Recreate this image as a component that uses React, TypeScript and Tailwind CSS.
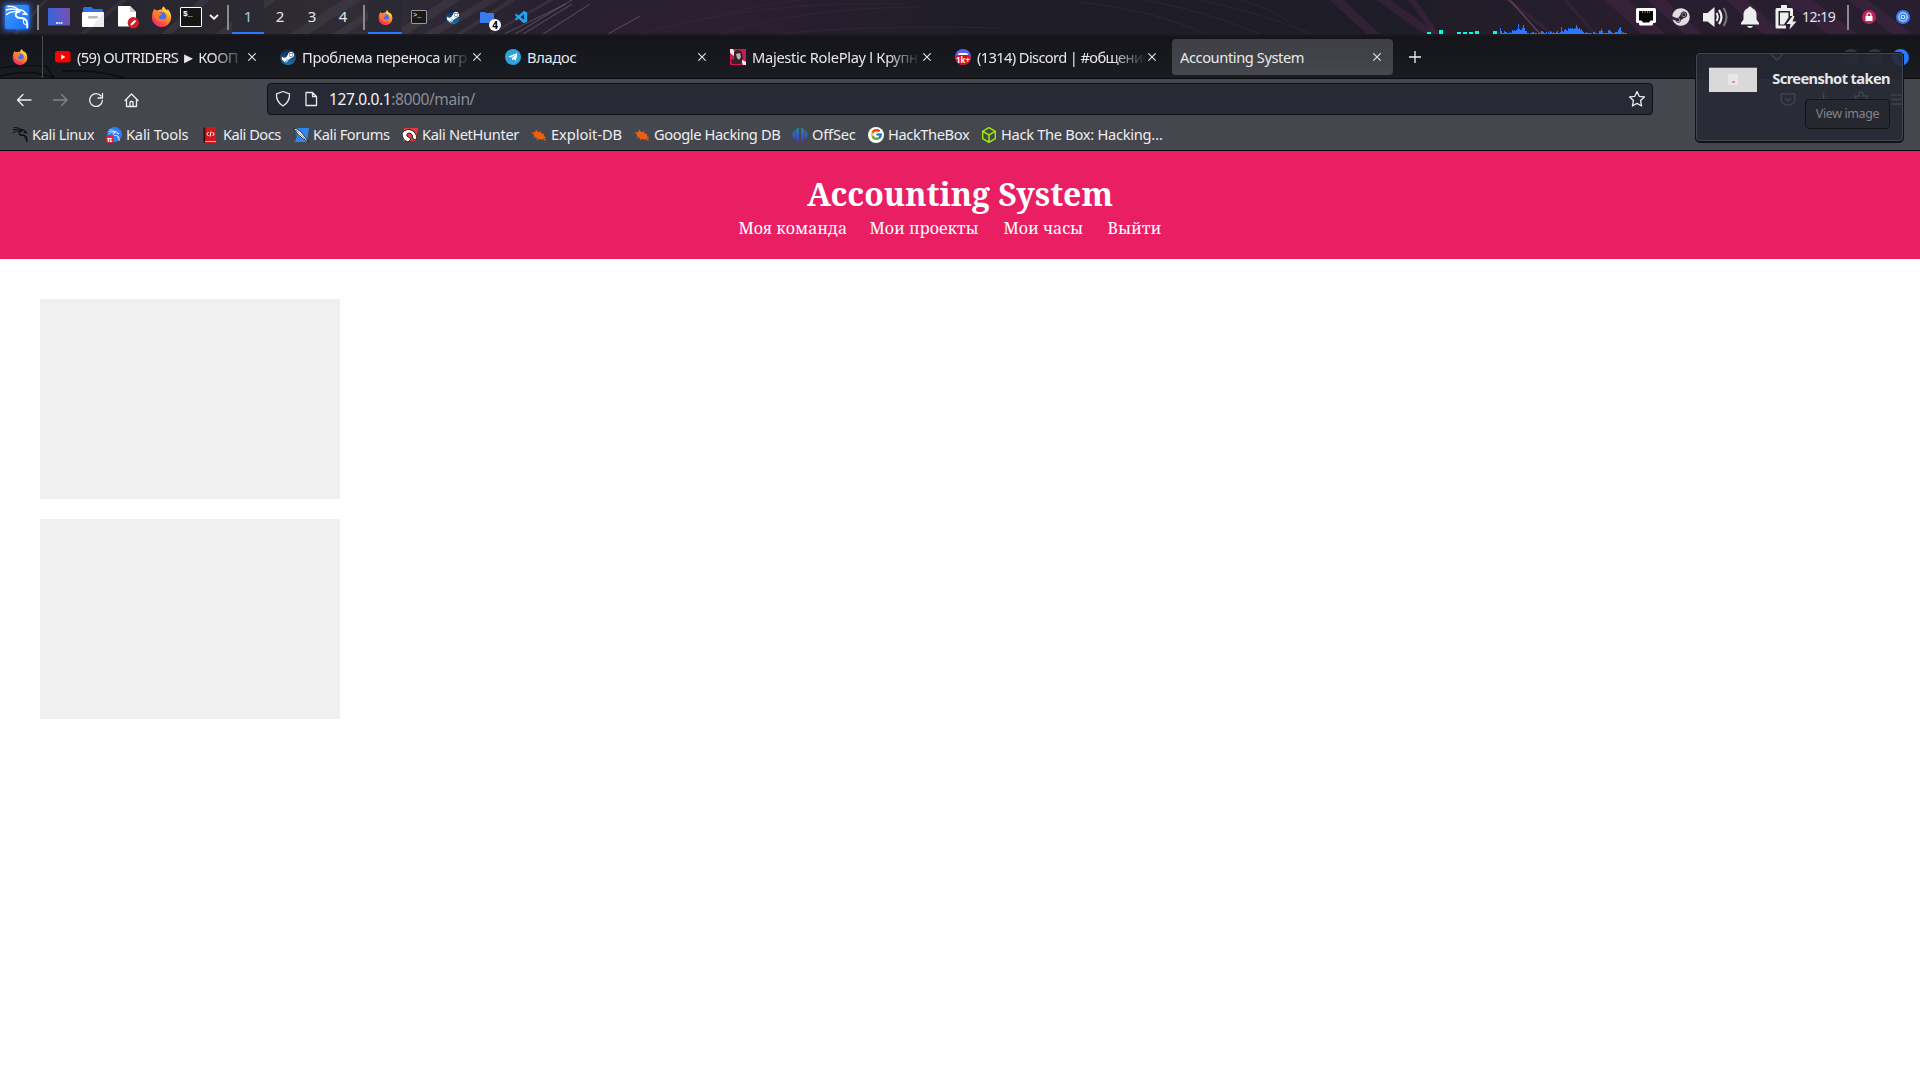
import React from "react";
import { SiHackthebox } from "react-icons/si";
import { FaSteam, FaSteamSymbol, FaTelegramPlane } from "react-icons/fa";
import { FcGoogle } from "react-icons/fc";
import { VscVscode } from "react-icons/vsc";

const SANS = "font-['Noto_Sans',sans-serif]";

function Firefox({ className }: { className: string }) {
  return (
    <svg viewBox="0 0 24 24" className={className}>
      <defs>
        <linearGradient id="fox" x1="0.85" y1="0.05" x2="0.2" y2="0.95">
          <stop offset="0" stopColor="#ffe34a" />
          <stop offset="0.45" stopColor="#ff8a2a" />
          <stop offset="0.8" stopColor="#ff3c4e" />
          <stop offset="1" stopColor="#e8308c" />
        </linearGradient>
      </defs>
      <path d="M3.500 3Q5 5 7.500 5Q9.500 3.800 12 4.200Q12.500 1.500 14.500 0.500Q16 3.500 18.500 5L18.800 3.500Q23.500 8 23 13.500A11 10.800 0 0 1 1 13Q1 7.500 3.500 3Z" fill="url(#fox)" />
      <circle cx="12.200" cy="12.300" r="5.400" fill="#4f6be8" />
      <path d="M3.300 6Q6 6 8 6.500C10 7 11 8.500 13 8.800C12.500 10.500 9.500 10.200 9 12.200C8.500 14 10 15.500 12.500 15.200C15 15 16 14 17.500 15C15 18.500 9 19 6 15.500C3 12 2.500 9 3.300 6Z" fill="#ff7a30" />
      <path d="M14.500 0.500C16 4 20 5.500 22 10C19.500 9 17.500 8.500 15 6C13.500 4 13.500 2 14.500 0.500Z" fill="#ffd33d" />
    </svg>
  );
}

function Dragon({ className }: { className: string }) {
  return (
    <svg viewBox="0 0 24 24" className={className} fill="none" stroke="currentColor" strokeLinecap="round" strokeLinejoin="round">
      <path d="M3 1.500Q9 0.500 13.500 4.500" strokeWidth="1.300" />
      <path d="M1.500 5Q8 2.500 14 6" strokeWidth="1.500" />
      <path d="M1.500 9.500Q6 5.500 13 7" strokeWidth="1.300" />
      <path d="M13 5Q17 4 19.500 7L22 9.500L18 9" strokeWidth="1.700" />
      <path d="M15 6.500Q9.500 7.500 11 11Q12.500 13.500 16.500 13Q21.500 13.500 22 18L22.300 22.500" strokeWidth="2" />
      <path d="M19 14.500Q17 18 20.500 19.500" strokeWidth="1.100" />
    </svg>
  );
}

function Bug() {
  return (
    <svg width="16" height="16" viewBox="0 0 16 16">
      <ellipse cx="8" cy="8.500" rx="6" ry="3.400" transform="rotate(28 8 8.500)" fill="#ee6011" />
      <path d="M1 5.500L4 7M5 3L6 6M9.500 4.500L9 7M13 7L11 8.500M2.500 10.500L5.500 9.500M6 13L7 10.500M14.500 13.500L12 11M15 10.500L12 10" stroke="#ee6011" strokeWidth="1.100" />
    </svg>
  );
}

function SteamBall({ className }: { className: string }) {
  return (
    <span className={`${className} flex items-center justify-center overflow-hidden rounded-full bg-linear-to-b from-[#11204a] to-[#1b78ad]`}>
      <FaSteamSymbol className="size-[14px] text-white" />
    </span>
  );
}

function Wallpaper() {
  const streaks = [
    [10, 40, 50, -5, 3], [75, 40, 130, -5, 4], [160, 40, 210, -5, 7], [215, 40, 275, -5, 9], [290, 40, 360, -5, 10],
    [330, 40, 400, -5, 7], [390, 40, 460, -5, 9], [420, 40, 500, -5, 7], [450, 40, 520, -5, 4], [480, 40, 560, -5, 3],
  ];
  const fine = [
    [500, 36, 566, 4], [512, 36, 575, -2], [520, 36, 572, 4], [540, 36, 590, 4], [608, 34, 640, 16],
  ];
  const right = [
    [1330, -6, 1380, 40, 9], [1375, -6, 1440, 40, 8], [1408, -6, 1440, 40, 6], [1500, -6, 1560, 40, 3],
    [1560, -6, 1600, 40, 3], [1610, -6, 1660, 40, 16], [1650, -6, 1700, 40, 12], [1730, -6, 1780, 40, 14], [1790, -6, 1850, 40, 18], [1850, -6, 1910, 40, 12],
  ];
  return (
    <svg className="absolute inset-0 h-[36px] w-full" viewBox="0 0 1920 36" preserveAspectRatio="none">
      <defs>
        <linearGradient id="wall" x1="0" x2="1">
          <stop offset="0" stopColor="#25222c" />
          <stop offset="0.2" stopColor="#302d37" />
          <stop offset="0.28" stopColor="#28202f" />
          <stop offset="0.38" stopColor="#2c1f30" />
          <stop offset="0.5" stopColor="#1f1e28" />
          <stop offset="0.72" stopColor="#1e1d27" />
          <stop offset="0.85" stopColor="#281d2e" />
          <stop offset="1" stopColor="#271f30" />
        </linearGradient>
      </defs>
      <rect width="1920" height="36" fill="url(#wall)" />
      {streaks.map(([a, b, c, d, w]) => (
        <line key={a} x1={a} y1={b} x2={c} y2={d} strokeWidth={w} stroke="#57525c" opacity="0.28" />
      ))}
      {fine.map(([a, b, c, d]) => (
        <line key={a} x1={a} y1={b} x2={c} y2={d} strokeWidth="1.200" stroke="#79637c" opacity="0.5" />
      ))}
      {right.map(([a, b, c, d, w]) => (
        <line key={a} x1={a} y1={b} x2={c} y2={d} strokeWidth={w} stroke="#4a2748" opacity="0.45" />
      ))}
      <line x1="1508" y1="-2" x2="1542" y2="36" stroke="#705068" strokeWidth="1.500" opacity="0.7" />
      <g fill="none" stroke="#3d2440" opacity="0.6">
        <path d="M640 34Q760 0 900 4M720 34Q800 8 920 7M760 36Q860 24 1000 28M700 20Q760 4 800 0" />
        <path d="M1080 2Q1160 12 1205 34M1130 -2Q1200 8 1260 34M1190 -2Q1260 12 1312 34M1235 -2Q1270 8 1290 22" />
      </g>
      <rect y="34" width="1920" height="2" fill="#1b1a20" />
    </svg>
  );
}

const blueBars = [6, 3, 1, 1, 3, 2, 2, 1, 1, 1, 2, 1, 4, 3, 4, 3, 4, 5, 10, 5, 4, 4, 6, 9, 6, 3, 3, 1, 1, 0, 1, 1, 2, 2, 1, 1, 1, 0, 1, 1, 1, 3, 3, 2, 1, 1, 2, 0, 2, 1, 3, 2, 1, 2, 1, 1, 2, 3, 1, 1, 2, 7, 3, 2, 4, 5, 4, 3, 6, 5, 6, 5, 6, 5, 5, 6, 9, 7, 5, 6, 4, 5, 3, 2, 1, 1, 2, 1, 1, 1, 1, 1, 0, 2, 2, 1, 1, 0, 1, 3, 3, 5, 3, 1, 1, 1, 1, 1, 4, 4, 3, 2, 1, 1, 1, 2, 2, 2, 4, 6, 7, 3, 1, 2, 1, 1, 1];

function Graph() {
  return (
    <svg width="202" height="14" viewBox="0 0 202 14" shapeRendering="crispEdges" className="mt-[20px] shrink-0">
      {[[0, 2], [12, 4], [30, 2], [36, 2], [42, 2], [48, 3], [66, 3]].map(([x, h]) => (
        <rect key={x} x={x} y={14 - h} width="4" height={h} fill="#00ffdc" />
      ))}
      {blueBars.map((h, i) => (
        <rect key={i} x={73 + i} y={14 - h} width="1" height={h} fill="#2777ff" />
      ))}
    </svg>
  );
}

function Sep({ className }: { className: string }) {
  return <span className={`${className} mt-[5px] h-[25px] w-[2px] shrink-0 bg-[#8b898f]`} />;
}

function Panel() {
  return (
    <div className={`relative h-[36px] overflow-hidden ${SANS}`}>
      <Wallpaper />
      <div className="relative flex h-[34px] items-start">
        <span className="mt-[5px] ml-[5px] flex size-[24px] shrink-0 items-center justify-center rounded-[2px] bg-linear-to-br from-[#3c9bf5] to-[#1d6fff] shadow-[0_0_5px_1px_#2777ff]">
          <Dragon className="size-[24px] text-white" />
        </span>
        <Sep className="ml-[8px]" />
        <svg width="22" height="18" viewBox="0 0 22 18" className="mt-[8px] ml-[9px] shrink-0">
          <defs>
            <linearGradient id="desk" x1="0" y1="0.6" x2="1" y2="0.3">
              <stop offset="0.2" stopColor="#3f63d6" />
              <stop offset="1" stopColor="#7a4fae" />
            </linearGradient>
          </defs>
          <rect width="22" height="17.500" rx="1" fill="url(#desk)" />
          <path d="M8 15h2M10.500 15h2M13 15h1.500" stroke="#fff" strokeWidth="1.500" />
        </svg>
        <svg width="22" height="20" viewBox="0 0 22 20" className="mt-[7px] ml-[12px] shrink-0">
          <path d="M1 1.500q0-1.500 1.500-1.500h7l2 2h8q1.500 0 1.500 1.500v5H1z" fill="#2f6fe4" />
          <rect y="5" width="22" height="15" rx="1" fill="#fff" />
          <path d="M22 5v15H10z" fill="#ececec" />
          <rect x="6" y="9" width="10" height="2.500" rx="1.200" fill="#b9b9b9" />
        </svg>
        <svg width="21" height="23" viewBox="0 0 21 23" className="mt-[6px] ml-[14px] shrink-0">
          <path d="M1 0h11l6 6v14.500H1q-1 0-1-1V1q0-1 1-1z" fill="#fff" />
          <path d="M12 0v5q0 1 1 1h5z" fill="#cfcfcf" />
          <circle cx="15.300" cy="16.700" r="5.700" fill="#d01f28" />
          <path d="M13 19l4.500-4.500" stroke="#fff" strokeWidth="2" />
        </svg>
        <Firefox className="mt-[6px] ml-[12px] size-[21px] shrink-0" />
        <span className="mt-[7px] ml-[8px] h-[20px] w-[22px] shrink-0 rounded-[1px] border border-white bg-[#151515] pt-[1px] pl-[2px] font-['Liberation_Mono',monospace] text-[8px] leading-[9px] font-bold text-white">$_</span>
        <svg width="10" height="6" viewBox="0 0 10 6" className="mt-[14px] ml-[7px] shrink-0" fill="none" stroke="#f4f4f4" strokeWidth="1.800">
          <path d="M1 1l4 3.700L9 1" />
        </svg>
        <Sep className="ml-[8px]" />
        <div className="ml-[3px] flex text-[15px] leading-[33px] text-[#e6e6ea]">
          <span className="h-[34px] w-[32px] border-b-2 border-[#2777ff] bg-[#2b2a33] text-center text-[#a9c9ee]">1</span>
          <span className="w-[32px] text-center">2</span>
          <span className="w-[32px] text-center">3</span>
          <span className="w-[30px] text-center">4</span>
        </div>
        <Sep className="ml-[5px]" />
        <div className="ml-[3px] flex h-[34px]">
          <span className="flex h-[34px] w-[34px] items-center justify-center border-b-2 border-[#2777ff] bg-[#2b2a33]">
            <Firefox className="mt-[2px] size-[15px]" />
          </span>
          <span className="flex w-[34px] items-center justify-center">
            <span className="h-[14px] w-[16px] rounded-[1px] border border-[#9a9a9a] bg-[#191919] pl-px font-['Liberation_Mono',monospace] text-[7px] leading-[8px] text-white">&gt;_</span>
          </span>
          <span className="flex w-[34px] items-center justify-center">
            <SteamBall className="size-[14px]" />
          </span>
          <span className="relative flex w-[34px] items-center justify-center">
            <svg width="14" height="11" viewBox="0 0 14 11"><path d="M0 1q0-1 1-1h4l1.500 1H13q1 0 1 1v8q0 1-1 1H1q-1 0-1-1z" fill="#3a7bf0" /></svg>
            <span className="absolute top-[19px] left-[19px] flex size-[12px] items-center justify-center rounded-full bg-white text-[10px] leading-none font-bold text-black">4</span>
          </span>
          <span className="flex w-[34px] items-center justify-center">
            <VscVscode className="size-[15px] text-[#22a5ee]" />
          </span>
        </div>
        <div className="ml-auto flex h-[34px] w-[493px] shrink-0">
          <Graph />
          <svg width="20" height="18" viewBox="0 0 20 18" className="mt-[8px] ml-[7px] shrink-0">
            <path d="M1.500 0h17Q20 0 20 1.500v12q0 1.500-1.500 1.500H17v1q0 1.500-1.500 1.500h-11Q3 17.500 3 16v-1H1.500Q0 15 0 13.500v-12Q0 0 1.500 0z" fill="#fff" />
            <path d="M3 3h14v9.500h-2.500l-1.500 2H7l-1.500-2H3z" fill="#050505" />
            <path d="M6.500 3v2M9 3v2M11.500 3v2M13.500 3v2" stroke="#8b7425" />
          </svg>
          <FaSteam className="mt-[8px] ml-[16px] size-[18px] shrink-0 text-[#dedee0]" />
          <svg width="26" height="22" viewBox="0 0 26 22" className="mt-[6px] ml-[13px] shrink-0">
            <path d="M0 7h4.500L11.500 1v20L4.500 15.500H0z" fill="#eee" />
            <path d="M13.500 7q2.500 4 0 8" fill="none" stroke="#eee" strokeWidth="2" />
            <path d="M16 4q5 7 0 14" fill="none" stroke="#eee" strokeWidth="2.200" />
            <path d="M20.500 2q6 9 0 18" fill="none" stroke="#77707b" strokeWidth="2.200" />
          </svg>
          <svg width="20" height="22" viewBox="0 0 20 22" className="mt-[6px] ml-[11px] shrink-0 fill-[#eee]">
            <path d="M10 0.500q1.500 0 1.800 1.400Q16.500 3.500 16.500 9v4.500L19 17v1.500H1V17l2.500-3.500V9Q3.500 3.500 8.200 1.900Q8.500 0.500 10 0.500z" />
            <path d="M7 20h6q-1 2-3 2t-3-2z" />
          </svg>
          <svg width="22" height="25" viewBox="0 0 22 25" className="mt-[5px] ml-[15px] shrink-0">
            <path d="M16.500 11V4.500H2V22h9" fill="none" stroke="#eee" strokeWidth="3" strokeLinejoin="round" />
            <path d="M6 0h6v4H6z" fill="#eee" />
            <path d="M5 7.500h8.500v5l-4.500 7H5z" fill="#eee" />
            <path d="M17.500 11l-6 8h4l-1 5.500 7-8h-4l2-5.500z" fill="#eee" />
          </svg>
          <span className="ml-[5px] w-[43px] text-[14px] leading-[34px] tracking-[-0.5px] text-[#dfe6ee]">12:19</span>
          <Sep className="ml-[2px]" />
          <svg width="14" height="14" viewBox="0 0 14 14" className="mt-[10px] ml-[13px] shrink-0">
            <circle cx="7" cy="7" r="7" fill="#bd2453" />
            <rect x="3.500" y="6" width="7" height="5" rx="0.500" fill="#fff" />
            <path d="M5 6.500V5q0-2 2-2t2 2v1.500" fill="none" stroke="#fff" strokeWidth="1.200" />
          </svg>
          <svg width="14" height="14" viewBox="0 0 14 14" className="mt-[10px] ml-[20px] shrink-0" fill="none">
            <circle cx="7" cy="7" r="7" fill="#367bf0" />
            <circle cx="7" cy="7" r="4.200" stroke="#dce8ff" strokeWidth="1.100" />
            <circle cx="7" cy="7" r="1.800" stroke="#dce8ff" strokeWidth="1.100" />
          </svg>
        </div>
      </div>
    </div>
  );
}

function CloseX() {
  return (
    <svg width="8" height="8" viewBox="0 0 8 8" className="shrink-0" fill="none" stroke="#e4e4e8" strokeWidth="1.100">
      <path d="M0.300 0.300l7.400 7.400M7.700 0.300L0.300 7.700" />
    </svg>
  );
}

function Tab({ icon, title, active, fade, spacing }: { icon?: React.ReactNode; title: string; active?: boolean; fade?: boolean; spacing: string }) {
  return (
    <div className={`flex h-[36px] w-[221px] shrink-0 items-center rounded-[4px] pr-[12px] pl-[8px] ${active ? "bg-linear-to-b from-[#3e3f43] to-[#46474f]" : ""}`}>
      {icon && <span className="mr-[6px] flex size-[16px] shrink-0 items-center justify-center">{icon}</span>}
      <span className={`min-w-0 flex-1 overflow-hidden text-[14.67px] leading-[20px] whitespace-nowrap text-[#e9e9ec] ${spacing} ${fade ? "mask-r-from-80% mask-r-to-100%" : ""}`}>{title}</span>
      <span className="ml-[2px]"><CloseX /></span>
    </div>
  );
}

function TabBar() {
  return (
    <div className={`relative flex h-[43px] items-center overflow-hidden border-b border-[#0c0c0e] bg-linear-to-b from-[#14151a] to-[#1b1c21] ${SANS}`}>
      <svg className="absolute top-[29px] left-0" width="130" height="14" viewBox="0 0 130 14" fill="none" stroke="#0d0e11" strokeWidth="1.500">
        <path d="M0 3Q25-1 46 1L54 13M0 11Q30 3 54 13M62 6Q95 4 125 13" />
      </svg>
      <div className="relative flex h-full w-[43px] shrink-0 items-center border-r border-[#4d4e52] pl-[12px]">
        <Firefox className="size-[16px]" />
      </div>
      <div className="relative ml-[4px] flex gap-[4px]">
        <Tab fade spacing="tracking-[-0.62px]" title="(59) OUTRIDERS ► КООП" icon={
          <svg width="16" height="12" viewBox="0 0 16 12"><rect width="15.500" height="11.500" rx="2.500" fill="#f00" /><path d="M6.200 3.400v5l4.200-2.500z" fill="#fff" /></svg>
        } />
        <Tab fade spacing="tracking-[-0.35px]" title="Проблема переноса игр с" icon={<SteamBall className="size-[16px]" />} />
        <Tab spacing="tracking-[-0.3px]" title="Владос" icon={
          <span className="flex size-[16px] items-center justify-center rounded-full bg-[#2ca3df]"><FaTelegramPlane className="mr-[1px] size-[10px] text-white" /></span>
        } />
        <Tab fade spacing="tracking-[-0.3px]" title="Majestic RolePlay l Крупн" icon={
          <svg width="16" height="16" viewBox="0 0 16 16">
            <rect width="16" height="16" fill="#d5145a" />
            <path d="M0 0h3l3 6-2 1L0 4zM11 10l5 3v3h-3z" fill="#f3e6ec" />
            <path d="M4 3q4-4 8 0l1 6-2 6H7L4 10z" fill="#2c2628" />
            <path d="M6 5l4-1 1 4-2 3-2-2z" fill="#b9b0b0" />
            <path d="M1 11l4-1 2 5H2z" fill="#3a2027" />
          </svg>
        } />
        <Tab fade spacing="tracking-[-0.62px]" title="(1314) Discord | #общение" icon={
          <span className="relative block size-[16px] overflow-hidden rounded-full bg-[#5865f2]">
            <span className="absolute top-[4px] left-[3px] h-[4px] w-[10px] rounded-full bg-white" />
            <span className="absolute bottom-0 left-0 flex h-[10px] w-[16px] items-center justify-center rounded-[4px] bg-[#e00b14] text-[8px] leading-none font-bold text-white">1k+</span>
          </span>
        } />
        <Tab spacing="tracking-[-0.42px]" title="Accounting System" active />
      </div>
      <svg width="12" height="12" viewBox="0 0 12 12" className="ml-[16px]" stroke="#f1f1f3" strokeWidth="1.300"><path d="M6 0v12M0 6h12" /></svg>
      <div className="ml-auto flex items-center">
        <svg width="12" height="7" viewBox="0 0 12 7" className="mr-[60px]" fill="none" stroke="#eee" strokeWidth="1.500"><path d="M0.500 0.500L6 6l5.500-5.500" /></svg>
        <span className="size-[16px] rounded-full bg-[#34363f]" />
        <span className="ml-[8px] size-[16px] rounded-full bg-[#34363f]" />
        <span className="mr-[11px] ml-[9px] flex size-[17px] items-center justify-center rounded-full bg-[#2777ff]">
          <svg width="7" height="7" viewBox="0 0 8 8" stroke="#101116" strokeWidth="1.800"><path d="M0 0l8 8M8 0L0 8" /></svg>
        </span>
      </div>
    </div>
  );
}

function NavBar() {
  return (
    <div className={`flex h-[40px] items-start bg-[#45474f] ${SANS}`}>
      <svg width="250" height="40" viewBox="0 0 250 40" className="shrink-0" fill="none" stroke="#eeeef0" strokeWidth="1.300" strokeLinecap="round" strokeLinejoin="round">
        <path d="M31 21H17.500M23 15.500L17.500 21L23 26.500" />
        <path d="M53.500 21H67M61.500 15.500L67 21L61.500 26.500" stroke="#85868c" />
        <path d="M101 17A6.400 6.400 0 1 0 102.400 21.500M102.500 14.500V19H98" />
        <path d="M125 21.500L131.500 15L138 21.500M126.500 20V27.500H136.500V20M130 27V23.300Q130 22.500 131.500 22.500T133 23.300V27" />
      </svg>
      <div className="mt-[4px] ml-[17px] flex h-[32px] w-[1386px] shrink-0 items-center rounded-[4px] border border-[#0f1014] bg-[#272935]">
        <svg width="50" height="18" viewBox="0 0 50 18" className="ml-[7px]" fill="none" stroke="#e8e8eb" strokeWidth="1.300" strokeLinejoin="round">
          <path d="M8 1.500l6.500 2.300q0.600 8-6.500 12.200Q0.900 11.800 1.500 3.800z" />
          <path d="M31 2.500h6.500l4 4v9H31zM37.500 2.500v4h4" />
        </svg>
        <span className="ml-[4px] text-[15.5px] leading-[22px] tracking-[-0.38px] text-[#8d8e96]"><span className="text-[#f4f4f6]">127.0.0.1</span>:8000/main/</span>
        <svg width="18" height="18" viewBox="0 0 18 18" className="mr-[6px] ml-auto" fill="none" stroke="#e8e8eb" strokeWidth="1.300" strokeLinejoin="round">
          <path d="M9 1.500l2.200 4.800 5.200.6-3.900 3.600 1.100 5.500L9 13.400 4.400 16l1.100-5.500L1.600 6.900l5.200-.6z" />
        </svg>
      </div>
      <svg width="130" height="18" viewBox="0 0 130 18" className="mt-[12px] mr-[10px] ml-auto" fill="none" stroke="#eee" strokeWidth="1.600">
        <path d="M2 3h12q1 0 1 1v4q0 6-7 6T1 8V4q0-1 1-1zM5 7l3 3 3-3" />
        <path d="M43.500 1v10M39 7l4.500 4.500L48 7M37.500 12v3h12v-3" />
        <path d="M75 5h4V3q0-2 2-2t2 2v2h4v10H75v-3q3 0 3-2t-3-2z" />
        <path d="M111 4h13M111 8.500h13M111 13h13" />
      </svg>
    </div>
  );
}

function Bookmarks() {
  const items: { label: string; w: string; t: string; icon: React.ReactNode }[] = [
    { label: "Kali Linux", w: "w-[94px]", t: "tracking-[-0.4px]", icon: <Dragon className="size-[17px] text-[#0b0b0c]" /> },
    { label: "Kali Tools", w: "w-[97px]", t: "tracking-[-0.2px]", icon: (
      <span className="relative flex size-[15px] items-center justify-center rounded-full bg-[#2f7df0]">
        <Dragon className="size-[12px] text-[#dfe9ff]" />
        <span className="absolute -bottom-px -left-px flex h-[8px] w-[8px] items-center justify-center rounded-full bg-[#e3232f] text-[7px] leading-none font-bold text-white">π</span>
      </span>) },
    { label: "Kali Docs", w: "w-[90px]", t: "tracking-[-0.5px]", icon: (
      <svg width="16" height="16" viewBox="0 0 16 16"><path d="M2 0h11v16H2z" fill="#d2161d" /><path d="M0.500 0.500h1.800v15H0.500z" fill="#37080c" /><path d="M2 14h11v1H2z" fill="#e8b0b0" /><path d="M5.500 5L3.800 7l1.700 2M9.500 5l1.700 2-1.700 2M8 4.500L7 9.500" stroke="#fff" fill="none" /></svg>) },
    { label: "Kali Forums", w: "w-[109px]", t: "tracking-[-0.4px]", icon: (
      <svg width="16" height="16" viewBox="0 0 16 16"><path d="M1 1h15l-2 14H2L4 9z" fill="#2f86f0" /><path d="M0.500 1l3.500 1 4 3 4 5 3.500 5-5-3-5-4z" fill="#fff" stroke="#111" strokeWidth="0.800" /><path d="M3 3l9 9" stroke="#222" strokeWidth="0.500" /></svg>) },
    { label: "Kali NetHunter", w: "w-[129px]", t: "tracking-[-0.35px]", icon: (
      <svg width="16" height="16" viewBox="0 0 16 16"><path d="M2 1h14l-2 13H1z" fill="#e33b46" /><path d="M0 6Q5 0 11 4q5 4 3 9l-3-1q0-5-3-6-4 0-3 3l4 3-3 3Q0 13 0 6z" fill="#fff" stroke="#151515" strokeWidth="0.900" /></svg>) },
    { label: "Exploit-DB", w: "w-[103px]", t: "tracking-[-0.05px]", icon: <Bug /> },
    { label: "Google Hacking DB", w: "w-[158px]", t: "tracking-[-0.4px]", icon: <Bug /> },
    { label: "OffSec", w: "w-[76px]", t: "tracking-[-0.2px]", icon: (
      <svg width="16" height="16" viewBox="0 0 16 16">
        <defs><linearGradient id="off" x1="0" y1="0" x2="0" y2="1"><stop offset="0" stopColor="#1798a8" /><stop offset="1" stopColor="#4a2fd0" /></linearGradient></defs>
        <path d="M3.200 2.500Q0.500 5 0.500 8T3.200 13zM6.800 1Q4.200 1 4.200 3v10q0 2 2.600 2zM9.200 1q2.600 0 2.600 2v10q0 2-2.600 2zM12.800 2.500Q15.500 5 15.500 8T12.800 13z" fill="url(#off)" />
      </svg>) },
    { label: "HackTheBox", w: "w-[113px]", t: "tracking-[-0.4px]", icon: <span className="flex size-[16px] items-center justify-center rounded-full bg-white"><FcGoogle className="size-[13px]" /></span> },
    { label: "Hack The Box: Hacking…", w: "w-[200px]", t: "tracking-[-0.3px]", icon: <SiHackthebox className="size-[16px] text-[#9fef00]" /> },
  ];
  return (
    <div className={`flex h-[32px] items-center border-b border-[#0c0c0d] bg-[#45474f] pl-[12px] ${SANS}`}>
      {items.map((b) => (
        <div key={b.label} className={`${b.w} flex shrink-0 items-center gap-[4px]`}>
          <span className="flex size-[16px] shrink-0 items-center justify-center">{b.icon}</span>
          <span className={`-mt-[2px] text-[14.67px] leading-[20px] whitespace-nowrap text-[#eeeef0] ${b.t}`}>{b.label}</span>
        </div>
      ))}
    </div>
  );
}

function Toast() {
  return (
    <div className={`absolute top-[52px] left-[1695px] flex h-[91px] w-[209px] rounded-[5px] border border-b-2 border-[#111216] bg-[#262833]/88 ${SANS}`}>
      <div className="flex h-full w-full rounded-[4px] border border-[#44464f] pt-[11px] pl-[12px]">
        <div className="flex h-[27px] w-[48px] shrink-0 flex-col bg-[#d9d9d9]">
          <div className="h-[2px] bg-[#24262c]" />
          <div className="h-[1px] bg-[#5a5c60]" />
          <div className="mx-auto mt-[6px] flex h-[11px] w-[10px] items-end justify-center bg-[#e8e6e7] pb-[2px]">
            <span className="h-[2px] w-[3px] bg-[#dc90ae]" />
          </div>
        </div>
        <div className="flex flex-1 flex-col items-end pr-[12px]">
          <span className="text-[14.67px] leading-[27px] font-bold tracking-[-0.62px] whitespace-nowrap text-[#e6e6e8]">Screenshot taken</span>
          <span className="mt-[7px] flex h-[30px] w-[85px] items-center justify-center rounded-[4px] border border-[#121317] bg-[#26272f] text-[12.5px] tracking-[-0.4px] text-[#82838a]">View image</span>
        </div>
      </div>
    </div>
  );
}

export default function App() {
  return (
    <div className="relative h-[1080px] w-[1920px] overflow-hidden bg-white">
      <Panel />
      <TabBar />
      <NavBar />
      <Bookmarks />
      <header className="flex h-[108px] flex-col items-center bg-[#e91e63] pt-[21px] font-['Noto_Serif',serif] text-white">
        <h1 className="text-[32px] leading-[44px] font-bold whitespace-nowrap">Accounting System</h1>
        <nav className="mt-px flex w-[443px] text-[16px] leading-[22px] whitespace-nowrap">
          <a className="w-[131px]">Моя команда</a>
          <a className="w-[134px]">Мои проекты</a>
          <a className="w-[104px]">Мои часы</a>
          <a>Выйти</a>
        </nav>
      </header>
      <main className="flex flex-col gap-[20px] p-[40px]">
        <div className="h-[200px] w-[300px] bg-[#f0f0f0]" />
        <div className="h-[200px] w-[300px] bg-[#f0f0f0]" />
      </main>
      <Toast />
    </div>
  );
}
